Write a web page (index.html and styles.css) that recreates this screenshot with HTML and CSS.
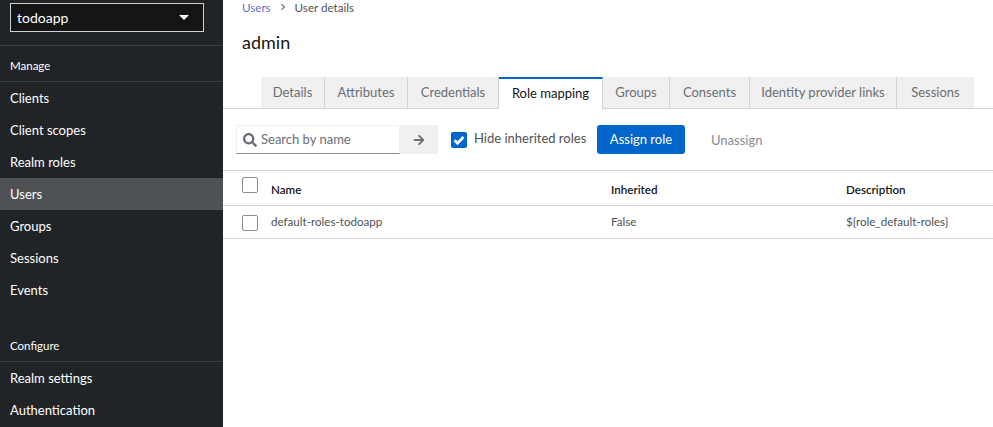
FILE: index.html
```html
<!DOCTYPE html>
<html>
<head>
	<title>Role mapping</title>
	<link rel="stylesheet" href="styles.css">
</head>
<body>
	<div class="page">
		<div class="sidebar">
			<div class="realm-box">
				<div class="realm-select">
					<span>todoapp</span>
					<svg class="caret" width="10" height="5" viewBox="0 0 10 5"><path d="M0 0h10L5 5z" fill="#fff"/></svg>
				</div>
			</div>
			<div class="nav-title">Manage</div>
			<ul class="nav">
				<li>Clients</li>
				<li>Client scopes</li>
				<li>Realm roles</li>
				<li class="current">Users</li>
				<li>Groups</li>
				<li>Sessions</li>
				<li>Events</li>
			</ul>
			<div class="nav-title configure">Configure</div>
			<ul class="nav">
				<li>Realm settings</li>
				<li>Authentication</li>
			</ul>
		</div>
		<div class="main">
			<div class="crumbs">
				<a>Users</a>
				<svg class="crumb-sep" width="5" height="8" viewBox="0 0 6 8"><path d="M1 0l4 4-4 4-1-1 3-3-3-3z" fill="#6a6e73"/></svg>
				<span>User details</span>
			</div>
			<h1>admin</h1>
			<ul class="tabs">
				<li class="t1">Details</li>
				<li class="t2">Attributes</li>
				<li class="t3">Credentials</li>
				<li class="t4 active">Role mapping</li>
				<li class="t5">Groups</li>
				<li class="t6">Consents</li>
				<li class="t7">Identity provider links</li>
				<li class="t8">Sessions</li>
			</ul>
			<div class="toolbar">
				<div class="search">
					<svg width="14" height="14" viewBox="0 0 512 512"><path fill="#6a6e73" d="M505 442.700L405.300 343c-4.500-4.500-10.600-7-17-7H372c27.600-35.300 44-79.700 44-128C416 93.100 322.900 0 208 0S0 93.100 0 208s93.100 208 208 208c48.300 0 92.700-16.400 128-44v16.300c0 6.400 2.500 12.500 7 17l99.700 99.700c9.400 9.400 24.600 9.400 33.900 0l28.300-28.300c9.400-9.400 9.400-24.600.1-34zM208 336c-70.700 0-128-57.200-128-128 0-70.700 57.200-128 128-128 70.700 0 128 57.200 128 128 0 70.700-57.200 128-128 128z"/></svg>
					<span class="search-text">Search by name</span>
				</div>
				<div class="go">
					<svg width="12" height="12" viewBox="0 0 448 512"><path fill="#6a6e73" d="M190.500 66.900l22.200-22.200c9.400-9.400 24.600-9.400 33.900 0L441 239c9.400 9.400 9.400 24.600 0 33.900L246.600 467.300c-9.400 9.400-24.600 9.400-33.900 0l-22.200-22.200c-9.500-9.500-9.300-25 .4-34.300L311.400 296H24c-13.300 0-24-10.700-24-24v-32c0-13.300 10.700-24 24-24h287.400L190.900 101.200c-9.800-9.300-10-24.800-.4-34.300z"/></svg>
				</div>
				<div class="hide-box">
					<svg width="16" height="16" viewBox="0 0 16 16"><rect width="16" height="16" rx="2" fill="#0066cc"/><path d="M3.500 8.300l3 3 6-6.300" fill="none" stroke="#fff" stroke-width="2.800"/></svg>
				</div>
				<span class="hide-label">Hide inherited roles</span>
				<div class="btn-primary">Assign role</div>
				<div class="btn-link">Unassign</div>
			</div>
			<div class="row head">
				<div class="cell-check"><span class="check"></span></div>
				<div>Name</div>
				<div>Inherited</div>
				<div>Description</div>
			</div>
			<div class="row body">
				<div class="cell-check"><span class="check"></span></div>
				<div>default-roles-todoapp</div>
				<div>False</div>
				<div>${role_default-roles}</div>
			</div>
		</div>
	</div>
</body>
</html>
```

FILE: styles.css
```css
* {
	padding: 0;
	margin: 0;
	box-sizing: border-box;
}

html, body {
	height: 427px;
	overflow: hidden;
	background: #fff;
}

body {
	font-family: Lato, "Liberation Sans", sans-serif;
	font-size: 13px;
	color: #151515;
}

ul {
	list-style: none;
}

.page {
	display: flex;
	height: 427px;
}

.sidebar {
	width: 223px;
	flex: none;
	background: #212427;
	color: #fff;
	overflow: hidden;
}

.realm-box {
	padding: 3px 19px 13px 10px;
	border-bottom: 1px solid #3c3f42;
	height: 46px;
}

.realm-select {
	display: flex;
	align-items: center;
	justify-content: space-between;
	height: 29px;
	padding: 0 14px 0 6px;
	background: #151515;
	border: 1px solid #d2d2d2;
	font-size: 14px;
}

.nav-title {
	height: 36px;
	padding: 12px 10px 0;
	font-size: 11.500px;
	line-height: 16px;
	border-bottom: 1px solid #3c3f42;
}

.configure {
	height: 56px;
	padding-top: 32px;
}

.nav li {
	height: 32px;
	line-height: 32px;
	padding-left: 10px;
}

.nav li.current {
	background: #4f5255;
}

.main {
	flex: 1;
	min-width: 0;
}

.crumbs {
	display: flex;
	align-items: center;
	height: 14px;
	padding-left: 19px;
	font-size: 11.600px;
	color: #4f5255;
}

.crumbs a {
	color: #6a6ec8;
}

.crumb-sep {
	margin: 0 9px 0 10px;
}

h1 {
	font-size: 18px;
	font-weight: 400;
	line-height: 24px;
	margin: 16px 0 0 19px;
}

.tabs {
	display: flex;
	height: 32px;
	margin-top: 23px;
	padding-left: 38px;
	border-bottom: 1px solid #d2d2d2;
	color: #6a6e73;
}

.tabs li {
	height: 31px;
	line-height: 30px;
	text-align: center;
	background: #f0f0f0;
	border-right: 1px solid #d2d2d2;
	white-space: nowrap;
}

.t1 { width: 64px; }
.t2 { width: 83px; }
.t3 { width: 91px; }
.t4 { width: 104px; }
.t5 { width: 67px; }
.t6 { width: 80px; }
.t7 { width: 147px; }
.t8 { width: 77px; }

.tabs li:last-child {
	border-right: 0;
}

.tabs li.active {
	height: 32px;
	background: #fff;
	color: #151515;
	border-top: 2px solid #0066cc;
	line-height: 28px;
}

.toolbar {
	display: flex;
	align-items: center;
	height: 62px;
	padding-left: 13px;
	border-bottom: 1px solid #d2d2d2;
}

.search {
	display: flex;
	align-items: center;
	gap: 4px;
	width: 164px;
	height: 29px;
	padding-left: 6px;
	border: 1px solid #f0f0f0;
	border-bottom-color: #8a8d90;
	color: #6a6e73;
}

.search-text {
	margin-bottom: 2px;
}

.go {
	display: flex;
	align-items: center;
	justify-content: center;
	width: 38px;
	height: 29px;
	background: #f0f0f0;
}

.hide-box {
	height: 16px;
	margin-left: 13px;
}

.hide-label {
	width: 123px;
	margin: 0 0 4px 7px;
	color: #4f5255;
	white-space: nowrap;
}

.btn-primary {
	width: 88px;
	height: 29px;
	line-height: 29px;
	text-align: center;
	background: #0066cc;
	color: #fff;
	border-radius: 3px;
}

.btn-link {
	margin-left: 26px;
	color: #8a8d90;
}

.row {
	display: grid;
	grid-template-columns: 48px 340px 235px 1fr;
	border-bottom: 1px solid #d2d2d2;
	font-size: 11.600px;
	color: #4f5255;
}

.row.head {
	height: 35px;
	line-height: 38px;
	font-weight: 600;
	color: #151515;
}

.row.body {
	height: 33px;
	line-height: 32px;
}

.cell-check {
	padding: 6px 0 0 19px;
}

.row.body .cell-check {
	padding-top: 9px;
}

.check {
	display: block;
	width: 16px;
	height: 16px;
	border: 1px solid #8a8d90;
	border-radius: 2px;
}
```
